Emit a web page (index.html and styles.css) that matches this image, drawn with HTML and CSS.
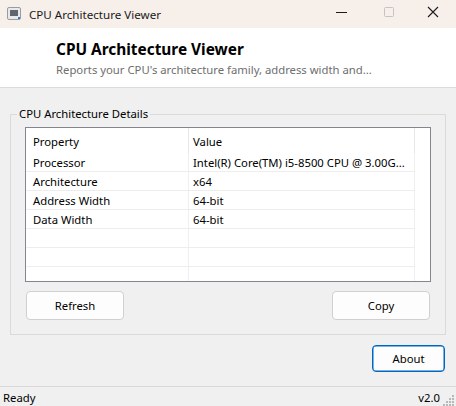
FILE: index.html
```html
<!DOCTYPE html>
<html lang="en">
<head>
  <meta charset="UTF-8">
  <title>CPU Architecture Viewer</title>
  <link rel="stylesheet" href="styles.css">
</head>
<body>
  <div class="titlebar">
    <svg class="app-icon" width="14" height="13" viewBox="0 0 14 13">
      <rect x="0.5" y="0.5" width="13" height="12" rx="1.5" fill="#e9e9ea" stroke="#9a9ca0"/>
      <rect x="3" y="3" width="8" height="6" fill="#5f6670"/>
      <rect x="11" y="10" width="2" height="2" fill="#3a78c8"/>
    </svg>
    <span class="win-title">CPU Architecture Viewer</span>
    <div class="controls">
      <svg width="46" height="28" viewBox="0 0 46 28"><path d="M18 12.5h11" stroke="#1b1b1b" stroke-width="1"/></svg>
      <svg width="46" height="28" viewBox="0 0 46 28"><rect x="20.5" y="7.5" width="9" height="9" rx="1" fill="none" stroke="#c4c4c4"/></svg>
      <svg width="46" height="28" viewBox="0 0 46 28"><path d="M18 7l10 10M28 7L18 17" stroke="#1b1b1b" stroke-width="1.1"/></svg>
    </div>
  </div>

  <div class="header">
    <h1>CPU Architecture Viewer</h1>
    <p>Reports your CPU's architecture family, address width and...</p>
  </div>

  <div class="main">
    <fieldset class="group">
      <legend>CPU Architecture Details</legend>
      <div class="tablebox">
        <table>
          <thead>
            <tr><th class="c1">Property</th><th class="c2">Value</th></tr>
          </thead>
          <tbody>
            <tr><td class="c1">Processor</td><td class="c2">Intel(R) Core(TM) i5-8500 CPU @ 3.00G...</td></tr>
            <tr><td class="c1">Architecture</td><td class="c2">x64</td></tr>
            <tr><td class="c1">Address Width</td><td class="c2">64-bit</td></tr>
            <tr><td class="c1">Data Width</td><td class="c2">64-bit</td></tr>
            <tr><td class="c1"></td><td class="c2"></td></tr>
            <tr><td class="c1"></td><td class="c2"></td></tr>
            <tr><td class="c1"></td><td class="c2"></td></tr>
            <tr><td class="c1"></td><td class="c2"></td></tr>
          </tbody>
        </table>
      </div>
      <div class="actions">
        <button class="btn">Refresh</button>
        <button class="btn">Copy</button>
      </div>
    </fieldset>

    <div class="bottom">
      <button class="btn about">About</button>
    </div>
  </div>

  <div class="statusbar">
    <span>Ready</span>
    <span class="version">v2.0</span>
    <svg class="grip" width="12" height="12" viewBox="0 0 12 12">
      <g fill="#b8b8b8">
        <rect x="9" y="1" width="2" height="2"/>
        <rect x="6" y="4" width="2" height="2"/><rect x="9" y="4" width="2" height="2"/>
        <rect x="3" y="7" width="2" height="2"/><rect x="6" y="7" width="2" height="2"/><rect x="9" y="7" width="2" height="2"/>
        <rect x="0" y="10" width="2" height="2"/><rect x="3" y="10" width="2" height="2"/><rect x="6" y="10" width="2" height="2"/><rect x="9" y="10" width="2" height="2"/>
      </g>
    </svg>
  </div>
</body>
</html>
```

FILE: styles.css
```css
body { margin: 0; width: 456px; height: 406px; overflow: hidden; font-family: "Segoe UI", "Noto Sans", sans-serif; font-size: 11.3px; color: #000; background: #f0f0f0; display: flex; flex-direction: column; }

.titlebar { height: 28px; display: flex; align-items: center; background: #f7efea; }
.app-icon { margin-left: 7px; margin-top: -1px; }
.win-title { margin-left: 8px; flex: 1; color: #1a1a1a; font-size: 11.6px; }
.controls { display: flex; }
.controls svg { display: block; }

.header { height: 60px; background: #fff; border-bottom: 1px solid #dcdcdc; padding-left: 56px; box-sizing: border-box; }
.header h1 { margin: 12px 0 0; font-size: 15.4px; font-weight: bold; line-height: 20px; }
.header p { margin: 2px 0 0; color: #6e6e6e; line-height: 16px; }

.main { flex: 1; padding: 18px 10px 0 10px; }
.group { margin: 0; border: 1px solid #dadada; padding: 5px 14px 14px; }
.group legend { padding: 0 2px; margin-left: -8px; line-height: 16px; }

.tablebox { height: 155px; box-sizing: border-box; border: 1px solid #85858d; background: #fff; overflow: hidden; }
table { border-collapse: collapse; table-layout: fixed; width: 389px; }
th, td { font-weight: normal; text-align: left; white-space: nowrap; overflow: hidden; padding: 0; }
th { height: 24px; padding-top: 1px; border-right: 1px solid #e6e6e6; }
td { height: 18px; border-right: 1px solid #f0f0f0; border-bottom: 1px solid #ededed; }
.c1 { width: 155px; padding-left: 7px; }
.c2 { width: 221px; padding-left: 4px; }

.actions { display: flex; justify-content: space-between; margin-top: 9px; padding: 0 1px; }
.btn { width: 98px; height: 29px; font: inherit; color: #000; background: #fdfdfd; border: 1px solid #d0d0d0; border-radius: 4px; }

.bottom { display: flex; justify-content: flex-end; margin-top: 10px; }
.about { width: 73px; height: 27px; border: 1px solid #0067c0; box-shadow: inset 0 0 0 0.5px #0067c0; margin-right: 1px; }

.statusbar { height: 20px; box-sizing: border-box; border-top: 1px solid #d8d8d8; display: flex; align-items: center; padding-left: 3px; padding-top: 1px; }
.statusbar span:first-child { flex: 1; }
.version { margin-right: 3px; }
.grip { align-self: flex-end; margin-right: 1px; }
```
